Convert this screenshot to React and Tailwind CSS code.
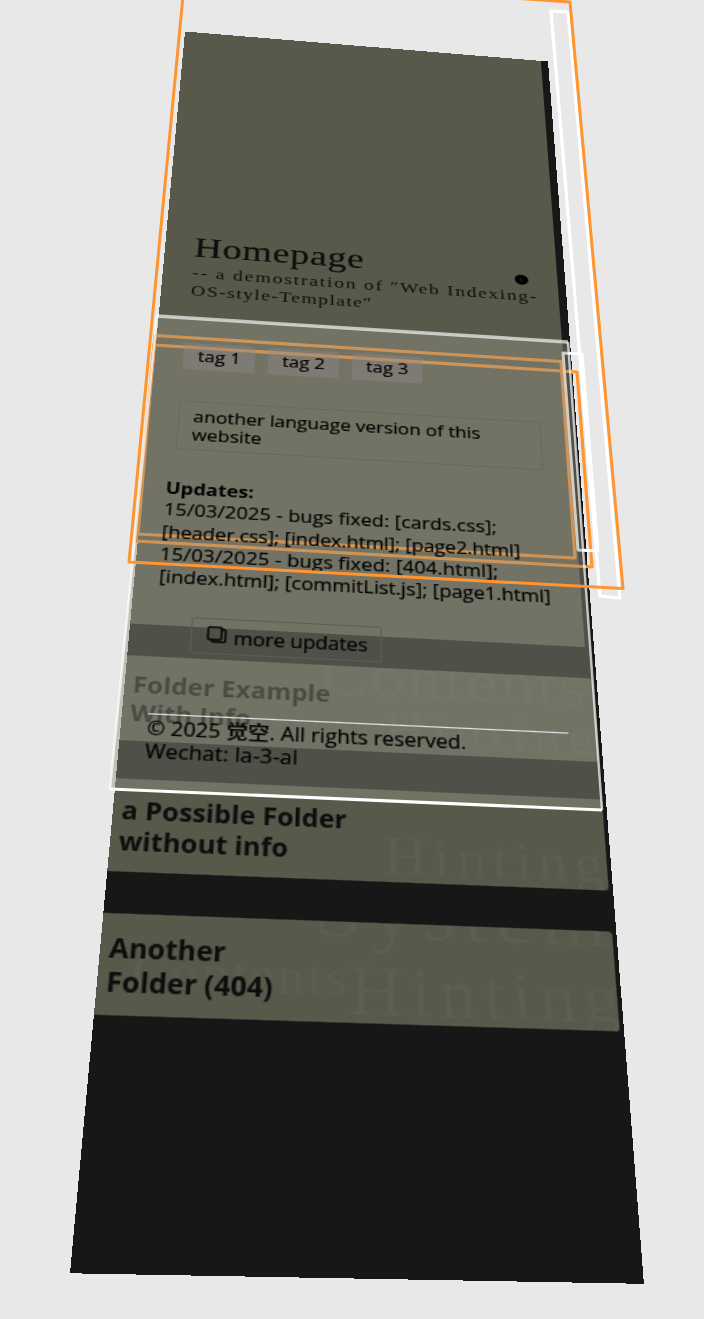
import React from 'react';

// CSS matrix3d mapping a w x h box onto four corner points (tl, tr, br, bl).
function project(w, h, [[x0, y0], [x1, y1], [x2, y2], [x3, y3]]) {
  const dx1 = x1 - x2, dx2 = x3 - x2, sx = x0 - x1 + x2 - x3;
  const dy1 = y1 - y2, dy2 = y3 - y2, sy = y0 - y1 + y2 - y3;
  const den = dx1 * dy2 - dx2 * dy1;
  const g = (sx * dy2 - dx2 * sy) / den;
  const k = (dx1 * sy - sx * dy1) / den;
  const m = [
    (x1 - x0 + g * x1) / w, (y1 - y0 + g * y1) / w, 0, g / w,
    (x3 - x0 + k * x3) / h, (y3 - y0 + k * y3) / h, 0, k / h,
    0, 0, 1, 0,
    x0, y0, 0, 1,
  ];
  return { width: w, height: h, transform: `matrix3d(${m.join(',')})` };
}

const PAGE = [[185, 31.5], [548, 61.5], [644, 1284], [70, 1273.5]];
const PANEL = [[157, 316], [568, 342], [602, 810], [110, 789]];

function Plane({ w, h, corners, className, children }) {
  return (
    <div className={`absolute left-0 top-0 origin-top-left ${className}`} style={project(w, h, corners)}>
      {children}
    </div>
  );
}

function Ghost({ className, children }) {
  return (
    <span className={`absolute whitespace-nowrap font-['Liberation_Serif',serif] leading-none ${className}`}>
      {children}
    </span>
  );
}

function Folder({ lines, className, children }) {
  return (
    <div className={`relative h-[72px] w-[347px] shrink-0 overflow-hidden rounded-r-[3px] bg-[#58584b] ${className}`}>
      {children}
      <div className="relative flex h-full flex-col justify-center pl-[6px] pt-[2px] font-['Open_Sans',sans-serif] text-[18.8px] font-bold leading-[24.5px] text-[#0d0d0d]">
        {lines.map((l) => (
          <div key={l} className="whitespace-nowrap">{l}</div>
        ))}
      </div>
    </div>
  );
}

function Tag({ children }) {
  return (
    <span className="flex h-[29px] w-[59px] items-center justify-center rounded-[2px] bg-[rgba(139,136,137,0.4)]">{children}</span>
  );
}

function Wires({ children }) {
  return (
    <svg className="pointer-events-none absolute left-0 top-0" width="704" height="1319" fill="none" strokeLinejoin="round">
      {children}
    </svg>
  );
}

export default function App() {
  return (
    <div className="relative h-[1319px] w-[704px] overflow-hidden bg-[#e8e8e8]">
      <Plane w={350} h={1148} corners={PAGE} className="flex flex-col bg-[#171717]">
        <header className="flex h-[679px] w-[342.5px] shrink-0 flex-col bg-[#58584b] pl-[25px] pt-[265px] font-['Liberation_Serif',serif] text-[#0e0e0c]">
          <div className="flex h-[40px] items-center justify-between pr-[26px]">
            <h1 className="whitespace-nowrap text-[33px] leading-[40px] tracking-[0.6px] [-webkit-text-stroke:0.2px_#0e0e0c]">Homepage</h1>
            <span className="mt-[22px] flex size-[12px] items-center justify-center rounded-full bg-black text-[7px] leading-none text-[#44443c]">i</span>
          </div>
          <p className="whitespace-nowrap text-[17px] leading-[21px]">
            <span className="block tracking-[1.5px]">-- a demostration of ″Web Indexing-</span>
            <span className="block tracking-[1.1px]">OS-style-Template″</span>
          </p>
        </header>
        <Folder lines={['Folder Example', 'With Info']} className="mt-[28px]">
          <Ghost className="left-[142px] top-[-18px] text-[52px] tracking-[2px] text-[#5b5b50]">Contents</Ghost>
          <Ghost className="left-[190px] top-[31px] text-[42px] tracking-[4.5px] text-[#5b5b50]">Hinting</Ghost>
        </Folder>
        <Folder lines={['a Possible Folder', 'without info']} className="mt-[31px]">
          <Ghost className="left-[189px] top-[31px] text-[42px] tracking-[4.5px] text-[#5d5d53]">Hinting</Ghost>
        </Folder>
        <Folder lines={['Another', 'Folder (404)']} className="mt-[31px]">
          <Ghost className="left-[142px] top-[-37px] text-[58px] tracking-[6px] text-[#5d5d53]">System</Ghost>
          <Ghost className="left-[22px] top-[23px] text-[36px] tracking-[2px] text-[#5d5d53]">Contents</Ghost>
          <Ghost className="left-[166px] top-[24px] text-[50px] tracking-[5px] text-[#5d5d53]">Hinting</Ghost>
        </Folder>
      </Plane>

      <Wires>
        <g stroke="#ff9530" strokeWidth="3.2">
          <polygon points="155,335.5 561,361.5 575,558 138,534" />
          <polygon points="154,345 577,372 592,567 136,541" />
        </g>
        <polygon points="563,353 582,354 598,551 578,550" stroke="#fff" strokeWidth="3" />
      </Wires>

      <Plane
        w={350}
        h={450}
        corners={PANEL}
        className="flex flex-col bg-[rgba(147,147,131,0.453)] pt-[28px] font-['Open_Sans','Noto_Sans_CJK_SC',sans-serif] text-[15.6px] font-medium text-black [-webkit-text-stroke:0.2px_#000]"
      >
        <div className="flex gap-[11px] pl-[25px]">
          <Tag>tag 1</Tag>
          <Tag>tag 2</Tag>
          <Tag>tag 3</Tag>
        </div>
        <div className="ml-[25px] mt-[34px] flex h-[51px] w-[297px] flex-col justify-center whitespace-nowrap rounded-[2px] border border-[#67675c] pl-[11px] pt-px leading-[19.5px]">
          <div>another language version of this</div>
          <div>website</div>
        </div>
        <div className="mt-[29px] h-[107px] whitespace-nowrap pl-[20px] leading-[21.3px]">
          <div className="font-bold [-webkit-text-stroke:0]">Updates:</div>
          <div className="tracking-[0.08px]">15/03/2025 - bugs fixed: [cards.css];</div>
          <div className="-tracking-[0.12px]">[header.css]; [index.html]; [page2.html]</div>
          <div className="tracking-[0.12px]">15/03/2025 - bugs fixed: [404.html];</div>
          <div className="-tracking-[0.03px] pl-px">[index.html]; [commitList.js]; [page1.html]</div>
        </div>
        <div className="ml-[48px] mt-[24px] flex h-[32px] w-[143px] items-center gap-[5px] whitespace-nowrap rounded-[2px] border border-[#5c5c54] pl-[11px] pt-[3px]">
          <svg className="-mt-[6px]" width="15" height="15" viewBox="0 0 15 15" fill="none" stroke="#000" strokeWidth="1.4">
            <rect x="1" y="1" width="10" height="11" rx="1" />
            <path d="M11 3h2a1 1 0 0 1 1 1v9a1 1 0 0 1-1 1H5a1 1 0 0 1-1-1v-1" />
          </svg>
          <span className="-tracking-[0.15px]">more updates</span>
        </div>
        <div className="ml-[22px] mt-[53px] w-[307px] whitespace-nowrap border-t border-[#e4e4ec] pt-[2px] leading-[18.5px]">
          <div>© 2025 觉空. All rights reserved.</div>
          <div className="tracking-[0.15px]">Wechat: la-3-al</div>
        </div>
      </Plane>

      <Wires>
        <g stroke="#fff">
          <path d="M157 316L568 342" strokeWidth="3.5" strokeOpacity=".65" />
          <path d="M157 316L110 789" strokeWidth="2.5" strokeOpacity=".7" />
          <path d="M568 342L602 810" strokeWidth="2.5" strokeOpacity=".7" />
          <path d="M110 789L602 810" strokeWidth="3.2" />
          <polygon points="551,11 568,12 620,598 600,596" strokeWidth="3.2" />
        </g>
        <polygon points="185,-25 570,2 623,588.5 129,562" stroke="#ff9530" strokeWidth="3" />
      </Wires>
    </div>
  );
}
